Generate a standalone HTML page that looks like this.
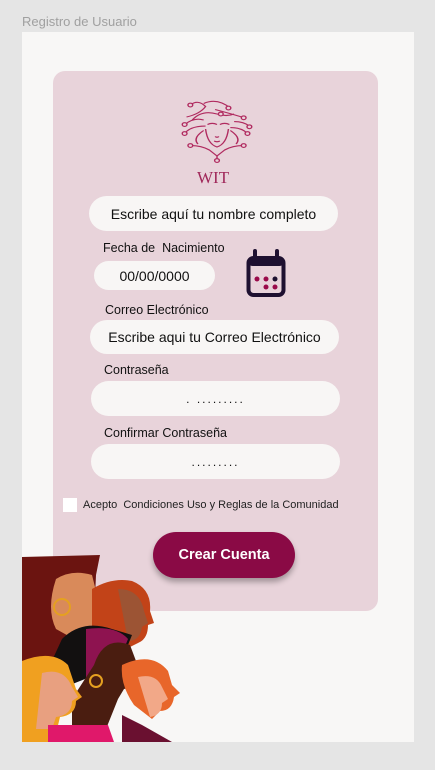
<!DOCTYPE html>
<html><head><meta charset="utf-8"><style>
*{margin:0;padding:0;box-sizing:border-box}
body{width:435px;height:770px;background:#e5e5e5;position:relative;overflow:hidden;font-family:"Liberation Sans",sans-serif;color:#111}
.a{position:absolute}
.title{left:22px;top:14px;font-size:13px;color:#a0a0a0}
.panel{left:22px;top:32px;width:392px;height:710px;background:#f8f7f6}
.card{left:53px;top:71px;width:325px;height:540px;background:#e8d3da;border-radius:12px}
.inp{background:#f8f6f5;border-radius:18px;display:flex;align-items:center;justify-content:center;font-size:14px;color:#111}
.lbl{font-size:12.5px;color:#111}
.btn{left:153px;top:532px;width:142px;height:46px;background:#8a0a45;border-radius:23px;color:#fff;font-weight:bold;font-size:14.5px;display:flex;align-items:center;justify-content:center;box-shadow:0 4px 6px rgba(0,0,0,.3)}
</style></head><body>
<div class="a title">Registro de Usuario</div>
<div class="a panel"></div>
<div class="a card"></div>
<svg class="a" style="left:177px;top:99px" width="80" height="66" viewBox="0 0 84 88" preserveAspectRatio="none" fill="none" stroke="#b02a5f" stroke-width="1.5">
<path d="M30 40 Q32 60 42 64 Q52 60 54 40"/>
<path d="M32 34 q5-3 10 0 M45 34 q5-3 10 0"/>
<path d="M40 50 q2 2 4 0 M39 56 q3 2 6 0"/>
<path d="M14 8 q8-8 16 2 q-6 10 -20 14 M28 6 q14-8 28 6 M40 14 q12 4 28 10 M16 28 q10-14 26-8 q10 4 18 0 M8 34 q10-10 20-6 M60 30 q10 0 16 6 M8 46 q6-10 22-10 M56 38 q12 0 18 8 M22 60 q-6-8 6-18 M62 60 q6-8-6-18 M14 62 q12 0 20 6 l8 8 l8-8 q8-6 20-6 M42 76 v6"/>
<g fill="#e8d3da"><circle cx="14" cy="8" r="2.5"/><circle cx="54" cy="12" r="2.5"/><circle cx="70" cy="25" r="2.5"/><circle cx="8" cy="34" r="2.5"/><circle cx="76" cy="37" r="2.5"/><circle cx="8" cy="46" r="2.5"/><circle cx="74" cy="46" r="2.5"/><circle cx="14" cy="62" r="2.5"/><circle cx="70" cy="62" r="2.5"/><circle cx="42" cy="82" r="2.5"/><circle cx="46" cy="20" r="2.5"/></g>
</svg>
<div class="a" style="left:197px;top:168px;font-family:'Liberation Serif',serif;font-size:17px;color:#a0285a">WIT</div>
<div class="a inp" style="left:89px;top:196px;width:249px;height:35px">Escribe aquí tu nombre completo</div>
<div class="a lbl" style="left:103px;top:241px">Fecha de&nbsp; Nacimiento</div>
<div class="a inp" style="left:94px;top:261px;width:121px;height:29px">00/00/0000</div>
<svg class="a" style="left:244px;top:248px" width="44" height="52" viewBox="0 0 44 52">
<rect x="4.5" y="10" width="35" height="37" rx="5" fill="#e8d3da" stroke="#1e1030" stroke-width="4"/>
<rect x="4.5" y="10" width="35" height="8" rx="4" fill="#1e1030"/>
<path d="M11 3v10M33 3v10" stroke="#1e1030" stroke-width="4" stroke-linecap="round"/>
<g fill="#9a0a4a"><circle cx="13" cy="31" r="2.5"/><circle cx="22" cy="31" r="2.5"/><circle cx="22" cy="39" r="2.5"/><circle cx="31" cy="39" r="2.5"/></g><circle cx="31" cy="31" r="2.5" fill="#1e1030"/>
</svg>
<div class="a lbl" style="left:105px;top:303px">Correo Electrónico</div>
<div class="a inp" style="left:90px;top:320px;width:249px;height:34px">Escribe aqui tu Correo Electrónico</div>
<div class="a lbl" style="left:104px;top:363px">Contraseña</div>
<div class="a inp" style="left:91px;top:381px;width:249px;height:35px;letter-spacing:2px;font-size:12px">. .........</div>
<div class="a lbl" style="left:104px;top:426px">Confirmar Contraseña</div>
<div class="a inp" style="left:91px;top:444px;width:249px;height:35px;letter-spacing:2px;font-size:12px">.........</div>
<div class="a" style="left:63px;top:498px;width:14px;height:14px;background:#fff"></div>
<div class="a" style="left:83px;top:499px;font-size:11px;color:#222">Acepto&nbsp; Condiciones Uso y Reglas de la Comunidad</div>
<div class="a btn">Crear Cuenta</div>
<svg class="a" style="left:22px;top:555px" width="160" height="187" viewBox="0 0 160 187">
<path d="M0 2 L78 0 L74 20 L70 110 L0 120Z" fill="#6b1410"/>
<path d="M34 24 q16-10 36-4 l6 24 l6 10 l-6 4 q0 16-14 18 l-10 8 l-18-10 q-10-20 0-50z" fill="#d98a5a"/>
<circle cx="40" cy="52" r="8" fill="none" stroke="#e5a020" stroke-width="2"/>
<path d="M70 34 q20-12 40-8 q20 8 18 30 l4 12 l-6 2 q0 14-10 18 l-16 8 l-30-10z" fill="#c24318"/>
<path d="M96 34 q22 0 26 22 l4 12-6 4q-2 14-14 14z" fill="#9c5434"/>
<path d="M40 84 q20-20 50-10 l20 6 l-12 30 l-50 20 l-20-20z" fill="#121010"/>
<path d="M64 74 q30-4 42 10 l-16 40 l-26 0z" fill="#8e1350"/>
<path d="M72 110 q10-30 36-20 l6 16 l6 10-6 2 q0 14-12 16 l-6 10 l-16 40 h-30 l0-40z" fill="#4a1d10"/>
<circle cx="74" cy="126" r="6" fill="none" stroke="#e5a020" stroke-width="2"/>
<path d="M0 106 q30-12 46 4 l8 24 l6 8-6 4 q0 14-16 16 l-6 25 h-36z" fill="#f0a020"/>
<path d="M20 118 q22-6 30 14 l6 10-6 4 q0 14-16 16 l-4 12 h-16z" fill="#e8a080"/>
<path d="M100 110 q30-14 46 6 l4 14 l8 8-6 4 q-2 14-14 14 l-8 8 l-18-14 q-14-20-12-40z" fill="#e8662a"/>
<path d="M116 122 q18-4 24 10 l6 12 l-6 4 q0 12-12 14z" fill="#f2a888"/>
<path d="M26 170 h60 l6 17 h-66z" fill="#e0186a"/>
<path d="M100 160 l20 10 l30 17 h-50z" fill="#6a1030"/>
</svg>
</body></html>
